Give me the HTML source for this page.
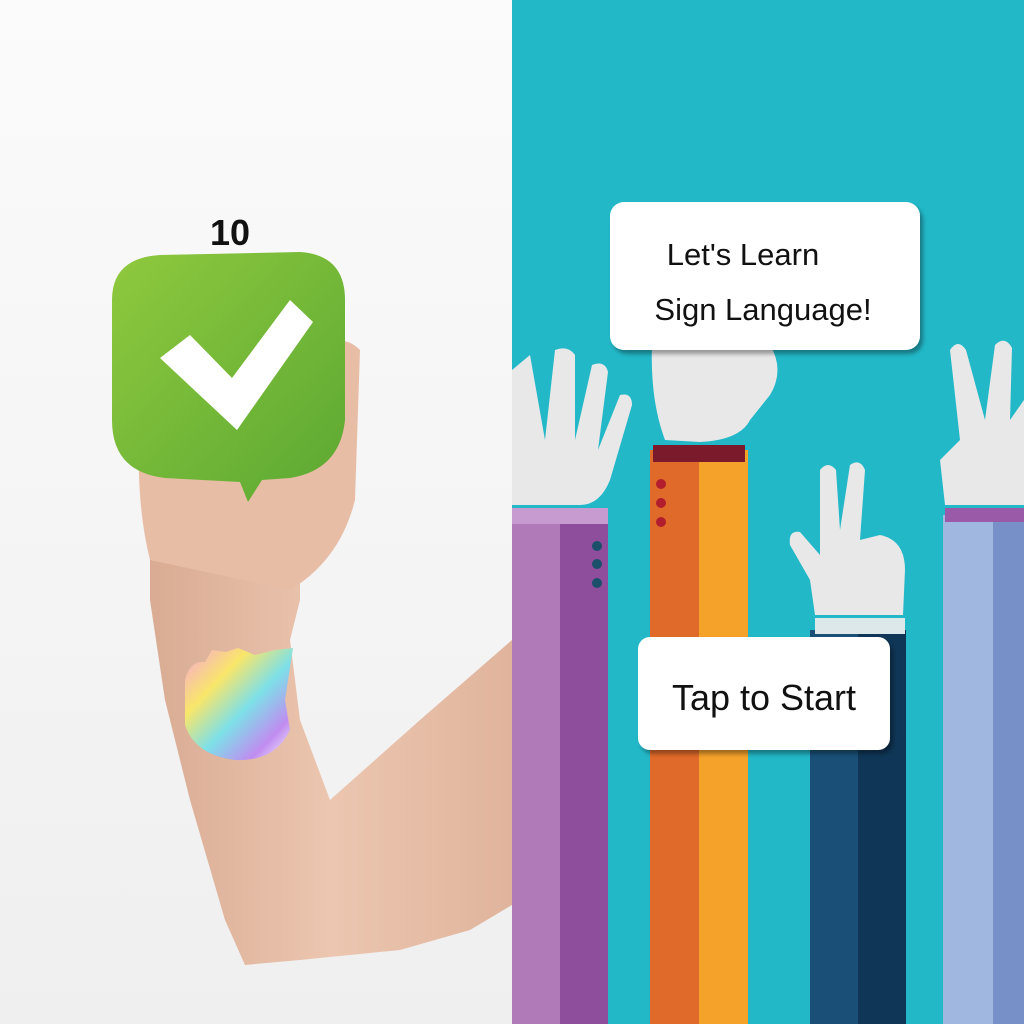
<!DOCTYPE html>
<html><head><meta charset="utf-8"><style>
html,body{margin:0;padding:0;width:1024px;height:1024px;overflow:hidden;background:#fff}
svg{display:block}
text{font-family:"Liberation Sans",sans-serif}
</style></head><body>
<svg width="1024" height="1024" viewBox="0 0 1024 1024" xmlns="http://www.w3.org/2000/svg">
<defs>
<linearGradient id="bg" x1="0" y1="0" x2="0" y2="1"><stop offset="0" stop-color="#fbfbfb"/><stop offset="1" stop-color="#efefef"/></linearGradient>
<linearGradient id="gr" x1="0" y1="0" x2="1" y2="1"><stop offset="0" stop-color="#8fc93e"/><stop offset="1" stop-color="#5ba833"/></linearGradient>
<linearGradient id="skin" x1="0" y1="0" x2="1" y2="0"><stop offset="0" stop-color="#d9ab93"/><stop offset="0.5" stop-color="#ecc6b0"/><stop offset="1" stop-color="#e0b49c"/></linearGradient>
<linearGradient id="rb" x1="0" y1="0" x2="1" y2="1"><stop offset="0" stop-color="#f7a5d8"/><stop offset="0.3" stop-color="#f9e66a"/><stop offset="0.55" stop-color="#7de0e8"/><stop offset="0.8" stop-color="#c08cf0"/><stop offset="1" stop-color="#ffffff"/></linearGradient>
<filter id="sh"><feDropShadow dx="3" dy="4" stdDeviation="2" flood-color="#000" flood-opacity="0.35"/></filter>
</defs>
<!-- left -->
<rect x="0" y="0" width="512" height="1024" fill="url(#bg)"/>
<path d="M150 470 L300 470 L300 600 L290 640 L300 720 L330 800 L420 720 L512 640 L512 905 L470 930 L400 950 L300 960 L245 965 L225 920 L190 800 L165 700 L150 600 Z" fill="url(#skin)"/>
<path d="M140 420 Q135 500 150 560 L290 590 Q340 560 355 500 L360 350 Q345 335 330 345 L300 470 Z" fill="#e7bda6"/>
<path d="M112 300 Q112 258 160 255 L300 252 Q345 255 345 300 L345 420 Q340 470 290 478 L262 480 L248 502 L240 482 L165 478 Q112 472 112 420 Z" fill="url(#gr)"/>
<path d="M160 358 L190 335 L232 378 L290 300 L313 322 L237 430 Z" fill="#fff"/>
<text x="230" y="245" font-size="36" font-weight="bold" text-anchor="middle" fill="#111">10</text>
<path d="M185 680 Q190 660 205 662 L212 650 L226 652 L238 648 L255 655 L275 650 L293 648 L285 700 L290 730 Q275 762 235 760 Q195 755 185 725 Z" fill="url(#rb)"/>
<!-- right -->
<rect x="512" y="0" width="512" height="1024" fill="#22b8c8"/>
<!-- purple -->
<rect x="512" y="510" width="48" height="514" fill="#b07ab8"/>
<rect x="560" y="510" width="48" height="514" fill="#8e4e9c"/>
<rect x="512" y="508" width="96" height="16" fill="#c79ad0"/>
<circle cx="597" cy="546" r="5" fill="#1b4f6a"/><circle cx="597" cy="564" r="5" fill="#1b4f6a"/><circle cx="597" cy="583" r="5" fill="#1b4f6a"/>
<path d="M512 370 L530 355 L545 440 L555 350 Q568 345 575 355 L575 440 L592 365 Q605 360 608 372 L598 450 L620 395 Q632 392 632 405 L610 480 Q600 505 580 505 L512 505 Z" fill="#e8e8e8"/>
<!-- orange -->
<rect x="650" y="450" width="49" height="574" fill="#e06a2a"/>
<rect x="699" y="450" width="49" height="574" fill="#f5a22a"/>
<rect x="653" y="445" width="92" height="17" fill="#7a1a2a"/>
<circle cx="661" cy="484" r="5" fill="#b31e2e"/><circle cx="661" cy="503" r="5" fill="#b31e2e"/><circle cx="661" cy="522" r="5" fill="#b31e2e"/>
<path d="M652 345 L770 345 Q785 370 770 395 L750 420 Q740 440 700 442 L665 440 Q650 400 652 345 Z" fill="#e8e8e8"/>
<!-- dark blue -->
<rect x="810" y="630" width="48" height="394" fill="#1a5078"/>
<rect x="858" y="630" width="48" height="394" fill="#0f3656"/>
<rect x="815" y="618" width="90" height="16" fill="#dde8ea"/>
<path d="M815 615 L810 580 L790 545 Q788 530 800 532 L820 555 L820 470 Q828 460 836 470 L840 530 L850 465 Q860 458 865 470 L860 540 L880 535 Q905 540 905 570 L903 615 Z" fill="#e8e8e8"/>
<!-- light blue -->
<rect x="943" y="515" width="50" height="509" fill="#a0b8e0"/>
<rect x="993" y="515" width="31" height="509" fill="#7890c8"/>
<rect x="945" y="508" width="79" height="14" fill="#9a5aa8"/>
<path d="M945 505 L940 460 L960 440 L950 350 Q958 338 966 350 L985 420 L995 345 Q1005 335 1012 348 L1010 420 L1024 400 L1024 505 Z" fill="#e8e8e8"/>
<!-- bubbles -->
<rect x="610" y="202" width="310" height="148" rx="14" fill="#fff" filter="url(#sh)"/>
<text x="743" y="265" font-size="31" text-anchor="middle" fill="#111" font-family="DejaVu Sans, sans-serif">Let's Learn</text>
<text x="763" y="320" font-size="31" text-anchor="middle" fill="#111" font-family="DejaVu Sans, sans-serif">Sign Language!</text>
<rect x="638" y="637" width="252" height="113" rx="12" fill="#fff" filter="url(#sh)"/>
<text x="764" y="710" font-size="36" text-anchor="middle" fill="#111" font-family="DejaVu Sans, sans-serif">Tap to Start</text>
</svg>
</body></html>
